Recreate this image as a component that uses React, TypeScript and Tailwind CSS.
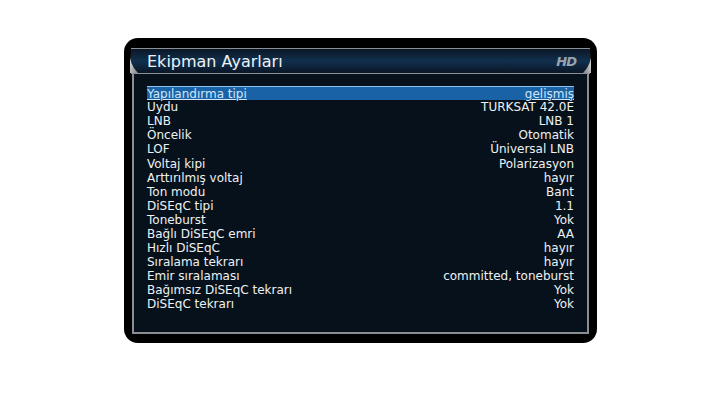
const rows: [string, string][] = [
  ['Yapılandırma tipi', 'gelişmiş'],
  ['Uydu', 'TURKSAT 42.0E'],
  ['LNB', 'LNB 1'],
  ['Öncelik', 'Otomatik'],
  ['LOF', 'Üniversal LNB'],
  ['Voltaj kipi', 'Polarizasyon'],
  ['Arttırılmış voltaj', 'hayır'],
  ['Ton modu', 'Bant'],
  ['DiSEqC tipi', '1.1'],
  ['Toneburst', 'Yok'],
  ['Bağlı DiSEqC emri', 'AA'],
  ['Hızlı DiSEqC', 'hayır'],
  ['Sıralama tekrarı', 'hayır'],
  ['Emir sıralaması', 'committed, toneburst'],
  ['Bağımsız DiSEqC tekrarı', 'Yok'],
  ['DiSEqC tekrarı', 'Yok'],
];

function Curl({ flip }: { flip?: boolean }) {
  return (
    <svg
      width="10"
      height="26"
      viewBox="0 0 10 26"
      className={`absolute top-[-1px] ${flip ? 'right-[-3px] -scale-x-100' : 'left-[-3px]'}`}
    >
      <defs>
        <linearGradient id={flip ? 'cr' : 'cl'} x1="0" y1="0" x2="1" y2="1">
          <stop offset="0" stopColor="#f2f2f2" />
          <stop offset="1" stopColor="#7d7d7d" />
        </linearGradient>
      </defs>
      <path d="M2 4 Q1 16 10 25 L2 25 Z" fill={`url(#${flip ? 'cr' : 'cl'})`} />
    </svg>
  );
}

export default function App() {
  return (
    <div className="w-[720px] h-[405px] bg-white pt-[38px] pl-[124px]" style={{ fontFamily: '"DejaVu Sans", sans-serif' }}>
      <div className="w-[473px] h-[305px] rounded-[14px] bg-black flex flex-col pt-[10px] px-[7px] pb-[9px]">
        {/* header */}
        <div className="relative h-[26px] border-y border-[#8c9096] bg-gradient-to-b from-[#0a1726] via-[#11304e] to-[#0a1626] flex items-center justify-between pl-[16px] pr-[14px]">
          <Curl />
          <span className="text-[16px] text-[#eef2f6] leading-none pt-[1px]">Ekipman Ayarları</span>
          <span className="text-[13px] font-bold italic text-[#9aa3ad] leading-none tracking-[-1px]">HD</span>
          <Curl flip />
        </div>
        {/* list */}
        <div className="flex-1 mx-[1px] border-x-2 border-b-2 border-[#8a8d91] bg-[#07111b] pt-[12px] px-[13px]">
          {rows.map(([k, v], i) => (
            <div
              key={k}
              className={`h-[14.1px] flex items-center justify-between text-[12px] leading-none ${
                i === 0
                  ? 'bg-[#1a62a6] border-t border-[#8fc3ee] text-[#cfe6fb] underline'
                  : 'text-[#eef1f4]'
              }`}
            >
              <span>{k}</span>
              <span>{v}</span>
            </div>
          ))}
        </div>
      </div>
    </div>
  );
}
